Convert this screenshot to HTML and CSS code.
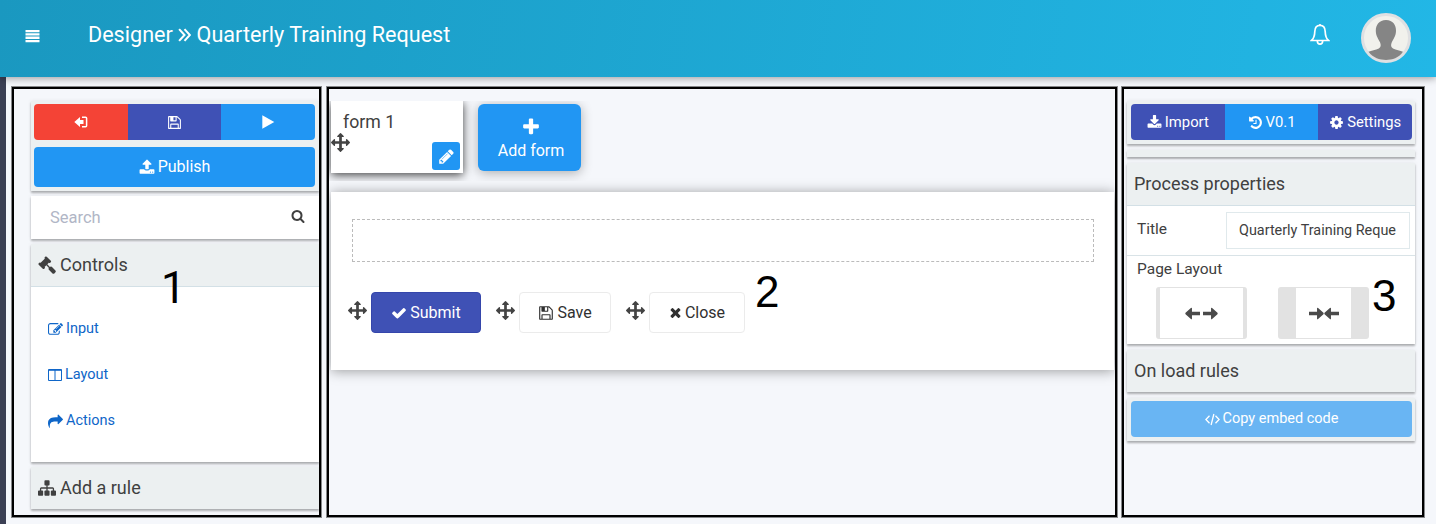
FILE: index.html
```html
<!DOCTYPE html>
<html lang="en">
<head>
<meta charset="utf-8">
<title>Designer</title>
<link rel="stylesheet" href="styles.css">
</head>
<body>
<svg class="defs" aria-hidden="true">
  <symbol id="floppy" viewBox="0 0 1792 1792"><path d="M512 1536h768v-384h-768v384zm896 0h128v-896q0-14-10-38.500t-20-34.500l-281-281q-10-10-34-20t-39-10v416q0 40-28 68t-68 28h-576q-40 0-68-28t-28-68v-416h-128v1280h128v-416q0-40 28-68t68-28h832q40 0 68 28t28 68v416zm-384-928v-320q0-13-9.500-22.500t-22.500-9.500h-192q-13 0-22.500 9.500t-9.500 22.500v320q0 13 9.500 22.500t22.500 9.500h192q13 0 22.500-9.500t9.500-22.500zm640 32v928q0 40-28 68t-68 28h-1344q-40 0-68-28t-28-68v-1344q0-40 28-68t68-28h928q40 0 88 20t76 48l280 280q28 28 48 76t20 88z"/></symbol>
  <symbol id="upload" viewBox="0 0 1792 1792"><path d="M1344 1472q0-26-19-45t-45-19-45 19-19 45 19 45 45 19 45-19 19-45zm256 0q0-26-19-45t-45-19-45 19-19 45 19 45 45 19 45-19 19-45zm128-224v320q0 40-28 68t-68 28h-1472q-40 0-68-28t-28-68v-320q0-40 28-68t68-28h427q21 56 70.500 92t110.500 36h256q61 0 110.500-36t70.500-92h427q40 0 68 28t28 68zm-325-648q-17 40-59 40h-256v448q0 26-19 45t-45 19h-256q-26 0-45-19t-19-45v-448h-256q-42 0-59-40-17-39 14-69l448-448q18-19 45-19t45 19l448 448q31 30 14 69z"/></symbol>
  <symbol id="download" viewBox="0 0 1792 1792"><path d="M1344 1344q0-26-19-45t-45-19-45 19-19 45 19 45 45 19 45-19 19-45zm256 0q0-26-19-45t-45-19-45 19-19 45 19 45 45 19 45-19 19-45zm128-224v320q0 40-28 68t-68 28h-1472q-40 0-68-28t-28-68v-320q0-40 28-68t68-28h465l135 136q58 56 136 56t136-56l136-136h464q40 0 68 28t28 68zm-325-569q17 41-14 70l-448 448q-18 19-45 19t-45-19l-448-448q-31-29-14-70 17-39 59-39h256v-448q0-26 19-45t45-19h256q26 0 45 19t19 45v448h256q42 0 59 39z"/></symbol>
  <symbol id="search" viewBox="0 0 1792 1792"><path d="M1216 832q0-185-131.500-316.500t-316.500-131.500-316.500 131.500-131.500 316.500 131.500 316.500 316.500 131.500 316.500-131.500 131.500-316.500zm512 832q0 52-38 90t-90 38q-54 0-90-38l-343-342q-179 124-399 124-143 0-273.500-55.500t-225-150-150-225-55.500-273.500 55.500-273.500 150-225 225-150 273.500-55.500 273.500 55.500 225 150 150 225 55.500 273.500q0 220-124 399l343 343q37 37 37 90z"/></symbol>
  <symbol id="arrows" viewBox="0 0 1792 1792"><path d="M1792 896q0 26-19 45l-256 256q-19 19-45 19t-45-19-19-45v-128h-384v384h128q26 0 45 19t19 45-19 45l-256 256q-19 19-45 19t-45-19l-256-256q-19-19-19-45t19-45 45-19h128v-384h-384v128q0 26-19 45t-45 19-45-19l-256-256q-19-19-19-45t19-45l256-256q19-19 45-19t45 19 19 45v128h384v-384h-128q-26 0-45-19t-19-45 19-45l256-256q19-19 45-19t45 19l256 256q19 19 19 45t-19 45-45 19h-128v384h384v-128q0-26 19-45t45-19 45 19l256 256q19 19 19 45z"/></symbol>
  <symbol id="check" viewBox="0 0 1792 1792"><path d="M1671 566q0 40-28 68l-724 724-136 136q-28 28-68 28t-68-28l-136-136-362-362q-28-28-28-68t28-68l136-136q28-28 68-28t68 28l294 295 656-657q28-28 68-28t68 28l136 136q28 28 28 68z"/></symbol>
  <symbol id="times" viewBox="200 0 1392 1792"><path d="M1490 1322q0 40-28 68l-136 136q-28 28-68 28t-68-28l-294-294-294 294q-28 28-68 28t-68-28l-136-136q-28-28-28-68t28-68l294-294-294-294q-28-28-28-68t28-68l136-136q28-28 68-28t68 28l294 294 294-294q28-28 68-28t68 28l136 136q28 28 28 68t-28 68l-294 294 294 294q28 28 28 68z"/></symbol>
  <symbol id="plus" viewBox="0 0 1792 1792"><path d="M1600 736v192q0 40-28 68t-68 28h-416v416q0 40-28 68t-68 28h-192q-40 0-68-28t-28-68v-416h-416q-40 0-68-28t-28-68v-192q0-40 28-68t68-28h416v-416q0-40 28-68t68-28h192q40 0 68 28t28 68v416h416q40 0 68 28t28 68z"/></symbol>
  <symbol id="pencil" viewBox="0 0 1792 1792"><path d="M491 1536l91-91-235-235-91 91v107h128v128h107zm523-928q0-22-22-22-10 0-17 7l-542 542q-7 7-7 17 0 22 22 22 10 0 17-7l542-542q7-7 7-17zm-54-192l416 416-832 832h-416v-416zm683 96q0 53-37 90l-166 166-416-416 166-165q36-38 90-38 53 0 91 38l235 234q37 39 37 91z"/></symbol>
  <symbol id="cog" viewBox="0 0 1792 1792"><path d="M1152 896q0-106-75-181t-181-75-181 75-75 181 75 181 181 75 181-75 75-181zm512-109v222q0 12-8 23t-20 13l-185 28q-19 54-39 91 35 50 107 138 10 12 10 25t-9 23q-27 37-99 108t-94 71q-12 0-26-9l-138-108q-44 23-91 38-16 136-29 186-7 28-36 28h-222q-14 0-24.500-8.500t-11.500-21.500l-28-184q-49-16-90-37l-141 107q-10 9-25 9-14 0-25-11-126-114-165-168-7-10-7-23 0-12 8-23 15-21 51-66.500t54-70.500q-27-50-41-99l-183-27q-13-2-21-12.500t-8-23.500v-222q0-12 8-23t19-13l186-28q14-46 39-92-40-57-107-138-10-12-10-24 0-10 9-23 26-36 98.500-107.500t94.500-71.500q13 0 26 10l138 107q44-23 91-38 16-136 29-186 7-28 36-28h222q14 0 24.500 8.500t11.500 21.500l28 184q49 16 90 37l142-107q9-9 24-9 13 0 25 10 129 119 165 170 7 8 7 22 0 12-8 23-15 21-51 66.500t-54 70.500q26 50 41 98l183 28q13 2 21 12.500t8 23.500z"/></symbol>
  <symbol id="history" viewBox="0 0 1792 1792"><path d="M1664 896q0 156-61 298t-164 245-245 164-298 61q-172 0-327-72.500t-264-204.500q-7-10-6.500-22.500t8.500-20.500l137-138q10-9 25-9 16 2 23 12 73 95 179 147t225 52q104 0 198.500-40.500t163.500-109.500 109.500-163.500 40.500-198.500-40.500-198.500-109.500-163.500-163.500-109.500-198.500-40.500q-98 0-188 35.500t-160 101.500l137 138q31 30 14 69-17 40-59 40h-448q-26 0-45-19t-19-45v-448q0-42 40-59 39-17 69 14l130 129q107-101 244.500-156.500t284.500-55.500q156 0 298 61t245 164 164 245 61 298zm-640-288v448q0 14-9 23t-23 9h-320q-14 0-23-9t-9-23v-64q0-14 9-23t23-9h224v-352q0-14 9-23t23-9h64q14 0 23 9t9 23z"/></symbol>
  <symbol id="gavel" viewBox="0 0 1792 1792"><path d="M1771 1536q0 53-37 90l-107 108q-39 37-91 37-53 0-90-37l-363-364q-38-36-38-90 0-53 43-96l-256-256-126 126q-14 14-34 14t-34-14q2 2 12.500 12t12.500 13 10 11.500 10 13.500 6 13.500 5.500 16.500 1.500 18q0 38-28 68-3 3-16.500 18t-19 20.500-18.500 16.500-22 15.500-22 9-26 4.500q-40 0-68-28l-408-408q-28-28-28-68 0-13 4.500-26t9-22 15.500-22 16.500-18.500 20.500-19 18-16.500q30-28 68-28 10 0 18 1.500t16.500 5.500 13.500 6 13.500 10 11.500 10 13 12.500 12 12.500q-14-14-14-34t14-34l348-348q14-14 34-14t34 14q-2-2-12.500-12t-12.500-13-10-11.500-10-13.500-6-13.500-5.500-16.500-1.500-18q0-38 28-68 3-3 16.500-18t19-20.500 18.500-16.500 22-15.500 22-9 26-4.500q40 0 68 28l408 408q28 28 28 68 0 13-4.500 26t-9 22-15.500 22-16.500 18.500-20.500 19-18 16.500q-30 28-68 28-10 0-18-1.500t-16.500-5.500-13.500-6-13.500-10-11.500-10-13-12.500-12-12.500q14 14 14 34t-14 34l-126 126 256 256q43-43 96-43 52 0 91 37l363 363q37 39 37 91z"/></symbol>
  <symbol id="sitemap" viewBox="0 0 1792 1792"><path d="M1792 1248v320q0 40-28 68t-68 28h-320q-40 0-68-28t-28-68v-320q0-40 28-68t68-28h96v-192h-512v192h96q40 0 68 28t28 68v320q0 40-28 68t-68 28h-320q-40 0-68-28t-28-68v-320q0-40 28-68t68-28h96v-192h-512v192h96q40 0 68 28t28 68v320q0 40-28 68t-68 28h-320q-40 0-68-28t-28-68v-320q0-40 28-68t68-28h96v-192q0-52 38-90t90-38h512v-192h-96q-40 0-68-28t-28-68v-320q0-40 28-68t68-28h320q40 0 68 28t28 68v320q0 40-28 68t-68 28h-96v192h512q52 0 90 38t38 90v192h96q40 0 68 28t28 68z"/></symbol>
  <symbol id="share" viewBox="0 0 1792 1792"><path d="M1792 640q0 26-19 45l-512 512q-19 19-45 19t-45-19-19-45v-256h-224q-98 0-175.500 6t-154 21.500-133 42.500-105.500 69.500-80 101-48.500 138.500-17.500 181q0 55 5 123 0 6 2.500 23.500t2.500 26.500q0 15-8.500 25t-23.500 10q-16 0-28-17-7-9-13-22t-13.500-30-10.500-24q-127-285-127-451 0-199 53-333 162-403 875-403h224v-256q0-26 19-45t45-19 45 19l512 512q19 19 19 45z"/></symbol>
  <symbol id="edit" viewBox="0 0 1792 1792"><path d="M888 1184l116-116-152-152-116 116v56h96v96h56zm440-720q-16-16-33 1l-350 350q-17 17-1 33t33-1l350-350q17-17 1-33zm80 594v190q0 119-84.500 203.500t-203.500 84.500h-832q-119 0-203.500-84.500t-84.500-203.500v-832q0-119 84.500-203.500t203.500-84.500h832q63 0 117 25 15 7 18 23 3 17-9 29l-49 49q-14 14-32 8-23-6-45-6h-832q-66 0-113 47t-47 113v832q0 66 47 113t113 47h832q66 0 113-47t47-113v-126q0-13 9-22l64-64q15-15 35-7t20 29zm-96-738l288 288-672 672h-288v-288zm444 132l-92 92-288-288 92-92q28-28 68-28t68 28l152 152q28 28 28 68t-28 68z"/></symbol>
  <symbol id="arrow" viewBox="0 0 14 12"><path d="M0 4.300h7.500V1.200Q7.500.2 8.500.8L13.500 5.400Q14 6 13.500 6.600L8.500 11.200Q7.500 11.800 7.500 10.800V7.700H0z"/></symbol>
</svg>

<header class="topbar">
  <svg class="menu" viewBox="0 0 15 13"><path d="M.5 0h14v2.300H.5zM.5 3.300h14v2.300H.5zM.5 6.600h14v2.300H.5zM.5 9.900h14v2.300H.5z"/></svg>
  <h1 class="crumbs">Designer
    <svg class="chevrons" viewBox="0 0 12 13"><path d="M1 1l5 5.500-5 5.500M6 1l5 5.500-5 5.500"/></svg>
    Quarterly Training Request</h1>
  <svg class="bell" viewBox="0 0 20 23"><path d="M1.500 17.500C4.300 15 4.700 12.500 4.800 8.500 4.900 4.500 6.800 2.300 10 2.300s5.100 2.200 5.200 6.200c.1 4 .5 6.500 3.300 9zM10 2.300V1M7.300 18c.2 4.200 5.200 4.200 5.400 0"/></svg>
  <svg class="avatar" viewBox="0 0 50 50">
    <circle cx="25" cy="25" r="23.500" fill="#f1f1ec" stroke="#dfe0e2" stroke-width="3"/>
    <path d="M25 7c-7 0-10.300 5-10.200 11 .1 5 2.700 8 4.300 11.500.9 2.500 1 4.500-1.300 6-3 1.500-7.600 2-10.300 3.300C12.500 45 18.500 47 25 47s12.500-2 17-8.200c-2.700-1.300-7-1.800-10-3.300-2.300-1.500-2.200-3.500-1.300-6 1.600-3.500 4.200-6.500 4.300-11.500C35.100 12 32 7 25 7z" fill="#858585"/>
  </svg>
</header>

<div class="workspace">
  <aside class="rail"></aside>

  <section class="zone zone-left">
    <div class="card pad">
      <div class="btn-row">
        <button class="btn red"><svg class="i14" viewBox="0 0 14 14"><path d="M.3 7L6 1.900v3h3.500v4.200H6v3z"/><path d="M8 2.200h3.600q1 0 1 1v7.600q0 1-1 1H8" fill="none" stroke="currentColor" stroke-width="1.500"/></svg></button>
        <button class="btn indigo"><svg class="i15"><use href="#floppy"/></svg></button>
        <button class="btn blue"><svg class="i14" viewBox="0 0 14 14"><path d="M1.300.3L13.300 7l-12 6.700z"/></svg></button>
      </div>
      <button class="btn blue wide"><svg class="i16"><use href="#upload"/></svg>Publish</button>
    </div>
    <div class="card search"><span>Search</span><svg class="i14"><use href="#search"/></svg></div>
    <div class="card">
      <h2 class="head lined"><svg class="i18"><use href="#gavel"/></svg>Controls</h2>
      <nav class="links">
        <a><svg class="i15"><use href="#edit"/></svg>Input</a>
        <a><svg class="i14" viewBox="0 0 14 14"><path d="M.5 1.500h13v11H.5zM.5 2.300h13M7 2v10.500" fill="none" stroke="currentColor"/></svg>Layout</a>
        <a><svg class="i15"><use href="#share"/></svg>Actions</a>
      </nav>
    </div>
    <h2 class="card head"><svg class="i18"><use href="#sitemap"/></svg>Add a rule</h2>
  </section>

  <section class="zone zone-mid">
    <div class="tabs">
      <div class="form-tab">
        <span>form 1</span>
        <svg class="grip"><use href="#arrows"/></svg>
        <button class="edit-btn"><svg class="i17"><use href="#pencil"/></svg></button>
      </div>
      <button class="add-form"><svg class="i20"><use href="#plus"/></svg>Add form</button>
    </div>
    <div class="canvas">
      <div class="drop"></div>
      <div class="actions">
        <svg class="grip"><use href="#arrows"/></svg>
        <button class="act indigo submit"><svg class="i16"><use href="#check"/></svg>Submit</button>
        <svg class="grip"><use href="#arrows"/></svg>
        <button class="act save"><svg class="i16"><use href="#floppy"/></svg>Save</button>
        <svg class="grip"><use href="#arrows"/></svg>
        <button class="act close"><svg class="x"><use href="#times"/></svg>Close</button>
      </div>
    </div>
  </section>

  <section class="zone zone-right">
    <div class="card pad">
      <div class="btn-row">
        <button class="btn indigo"><svg class="i15"><use href="#download"/></svg>Import</button>
        <button class="btn blue"><svg class="i15"><use href="#history"/></svg>V0.1</button>
        <button class="btn indigo"><svg class="i15"><use href="#cog"/></svg>Settings</button>
      </div>
    </div>
    <div class="card sliver"></div>
    <div class="card">
      <h2 class="head lined">Process properties</h2>
      <div class="props">
        <div class="prop"><label>Title</label><div class="field">Quarterly Training Reque</div></div>
        <div class="page-layout">
          <label>Page Layout</label>
          <div class="choices">
            <div class="choice fluid"><svg class="flip"><use href="#arrow"/></svg><svg><use href="#arrow"/></svg></div>
            <div class="choice fixed"><svg><use href="#arrow"/></svg><svg class="flip"><use href="#arrow"/></svg></div>
          </div>
        </div>
      </div>
    </div>
    <h2 class="card head">On load rules</h2>
    <div class="card pad">
      <button class="btn faded"><svg class="i15" viewBox="0 0 15 14"><path d="M4.500 3.200L.9 7l3.600 3.800M10.500 3.200L14.100 7l-3.600 3.800M8.900 1.500L6.100 12.500" fill="none" stroke="currentColor" stroke-width="1.300"/></svg>Copy embed code</button>
    </div>
  </section>

  <span class="mark mark-1">1</span>
  <span class="mark mark-2">2</span>
  <span class="mark mark-3">3</span>
</div>
</body>
</html>
```
FILE: styles.css
```css
* { box-sizing: border-box; }
body {
  margin: 0;
  width: 1436px;
  height: 524px;
  overflow: hidden;
  display: flex;
  flex-direction: column;
  background: #f5f7fb;
  color: #404040;
  font: 16px/20px Roboto, "Liberation Sans", sans-serif;
}
h1, h2 { margin: 0; font-weight: 400; }
button { margin: 0; padding: 0; border: 0; font: inherit; color: inherit; }
svg { fill: currentColor; flex: none; }
.defs { display: none; }
.i14 { width: 14px; height: 14px; }
.i15 { width: 15px; height: 15px; }
.i16 { width: 16px; height: 16px; }
.i17 { width: 17px; height: 17px; }
.i18 { width: 18px; height: 18px; }
.i20 { width: 20px; height: 20px; }

.topbar {
  flex: none;
  z-index: 1;
  display: flex;
  align-items: center;
  height: 77px;
  padding: 0 25px;
  color: #fff;
  background: linear-gradient(100deg, #1a98c0, #22b7e6);
  box-shadow: 0 1px 8px rgba(0, 0, 0, .4);
}
.menu { width: 15px; height: 13px; margin-top: -4px; }
.crumbs {
  flex: 1;
  margin: -8px 0 0 48px;
  font-size: 21.600px;
  line-height: 28px;
  white-space: nowrap;
}
.chevrons {
  width: 13px;
  height: 14px;
  margin: 0;
  fill: none;
  stroke: #fff;
  stroke-width: 1.900;
}
.bell {
  width: 20px;
  height: 23px;
  margin: -8px 31px 0 0;
  fill: none;
  stroke: #fff;
  stroke-width: 1.700;
}
.avatar { width: 50px; height: 50px; margin-top: -2px; }

.workspace { position: relative; flex: 1; display: flex; }
.rail { width: 6px; margin-right: 6px; background: #3b3f54; }
.zone {
  height: 430px;
  margin-top: 10px;
  border: 2px solid #000;
  box-shadow: 0 0 0 1px rgba(0, 0, 0, .45);
  padding-top: 12px;
  display: flex;
  flex-direction: column;
  gap: 5px;
  overflow: hidden;
}
.zone-left { width: 309px; padding-left: 17px; }
.zone-mid { width: 790px; margin-left: 6px; gap: 0; padding-left: 0; }
.zone-right { width: 302px; margin-left: 5px; padding-left: 3px; padding-right: 7px; gap: 6px; }

.card {
  flex: none;
  background: #ecf0f1;
  box-shadow: 0 2px 2px rgba(0, 0, 0, .28), 0 0 4px rgba(0, 0, 0, .08);
}
.zone-left .card { width: 288px; }
.pad { padding: 3px 3px 4px 4px; display: grid; gap: 7px; }
.zone-left .pad { height: 90px; padding-left: 3px; padding-right: 4px; }
.btn-row {
  display: grid;
  grid-template-columns: repeat(3, 1fr);
  height: 36px;
  border-radius: 4px;
  overflow: hidden;
}
.btn {
  display: flex;
  align-items: center;
  justify-content: center;
  gap: 3px;
  color: #fff;
  font-size: 14.800px;
}
.red { background: #f44336; }
.indigo { background: #3f51b5; color: #fff; }
.blue { background: #2196f3; }
.wide { height: 40px; border-radius: 4px; font-size: 16px; }
.faded { height: 36px; border-radius: 4px; background: #69b5f3; font-size: 14.500px; }

.search {
  height: 43px;
  display: flex;
  align-items: center;
  justify-content: space-between;
  padding: 0 14px 0 19px;
  background: #fff;
  color: #b1b6c6;
  font-size: 16.500px;
}
.search svg { color: #404040; margin-top: -3px; }
.head {
  display: flex;
  align-items: center;
  gap: 4px;
  height: 42px;
  padding: 0 7px;
  font-size: 18px;
}
.lined { height: 43px; border-bottom: 1px solid #d3e0e6; }
.links {
  height: 175px;
  padding: 32px 17px;
  display: grid;
  grid-auto-rows: 20px;
  gap: 26px;
  background: #fff;
  color: #0f66c8;
  font-size: 14.500px;
}
.links a { display: flex; align-items: center; gap: 3px; }

.tabs {
  flex: none;
  display: flex;
  height: 80px;
  padding-left: 2px;
  overflow: hidden;
}
.form-tab {
  position: relative;
  width: 132px;
  height: 72px;
  padding: 11px 12px;
  background: #fff;
  box-shadow: 0 2px 9px rgba(0, 0, 0, .75);
  font-size: 17.700px;
}
.grip { width: 19px; height: 19px; color: #444; }
.form-tab .grip { position: absolute; left: 0; top: 32px; }
.edit-btn {
  position: absolute;
  right: 3px;
  bottom: 3px;
  width: 28px;
  height: 28px;
  border-radius: 3px;
  display: grid;
  place-items: center;
  background: #2196f3;
  color: #fff;
}
.add-form {
  width: 103px;
  height: 67px;
  margin: 3px 0 0 15px;
  padding: 13px 0 0 3px;
  border-radius: 6px;
  display: flex;
  flex-direction: column;
  align-items: center;
  gap: 4px;
  background: #2196f3;
  color: #fff;
  box-shadow: 0 2px 12px rgba(0, 0, 0, .3);
}
.canvas {
  width: 783px;
  height: 178px;
  margin: 11px 0 0 2px;
  padding: 27px 20px 0 21px;
  background: #fff;
  box-shadow: 0 1px 12px rgba(0, 0, 0, .38);
}
.drop { height: 43px; border: 1px dashed #bbb; }
.actions { display: flex; margin: 30px 0 0 -4px; }
.actions .grip { margin: 9px 4px 0 0; }
.act {
  display: flex;
  align-items: center;
  justify-content: center;
  gap: 3px;
  height: 41px;
  border: 1px solid #ebebeb;
  border-radius: 4px;
  background: #fff;
  color: #303030;
}
.act.indigo { background: #3f51b5; border-color: #3546ab; color: #fff; }
.submit { width: 110px; margin-right: 15px; }
.save { width: 92px; margin-right: 15px; }
.close { width: 96px; }
.x { width: 13px; height: 15px; }

.zone-right .pad { height: 43px; }
.sliver { height: 7px; }
.props { height: 138px; background: #fff; font-size: 15.500px; }
.prop {
  display: flex;
  justify-content: space-between;
  height: 50px;
  padding: 6px 5px 0 10px;
  border-bottom: 1px solid #d9e3e7;
}
.prop label { margin-top: 7px; }
.field {
  width: 184px;
  height: 37px;
  padding: 8px 12px;
  border: 1px solid #e0e9ec;
  font-size: 14.400px;
  white-space: nowrap;
}
.page-layout { padding: 3px 0 0 10px; }
.choices { display: flex; gap: 31px; padding: 8px 0 0 19px; }
.choice {
  width: 91px;
  height: 52px;
  border: 1px solid #e2e2e2;
  border-radius: 3px;
  display: flex;
  align-items: center;
  justify-content: center;
  color: #4a4a4a;
}
.choice svg { width: 15px; height: 13px; }
.fluid { gap: 3px; border-width: 1px 4px; }
.fixed { gap: 0; border-width: 1px 18px; }
.flip { transform: scaleX(-1); }

.mark {
  position: absolute;
  font: 44px/44px "Liberation Sans", Arial, sans-serif;
  color: #000;
}
.mark-1 { left: 161px; top: 189px; font-family: Roboto, sans-serif; }
.mark-2 { left: 755px; top: 193px; }
.mark-3 { left: 1372px; top: 197px; }
```
